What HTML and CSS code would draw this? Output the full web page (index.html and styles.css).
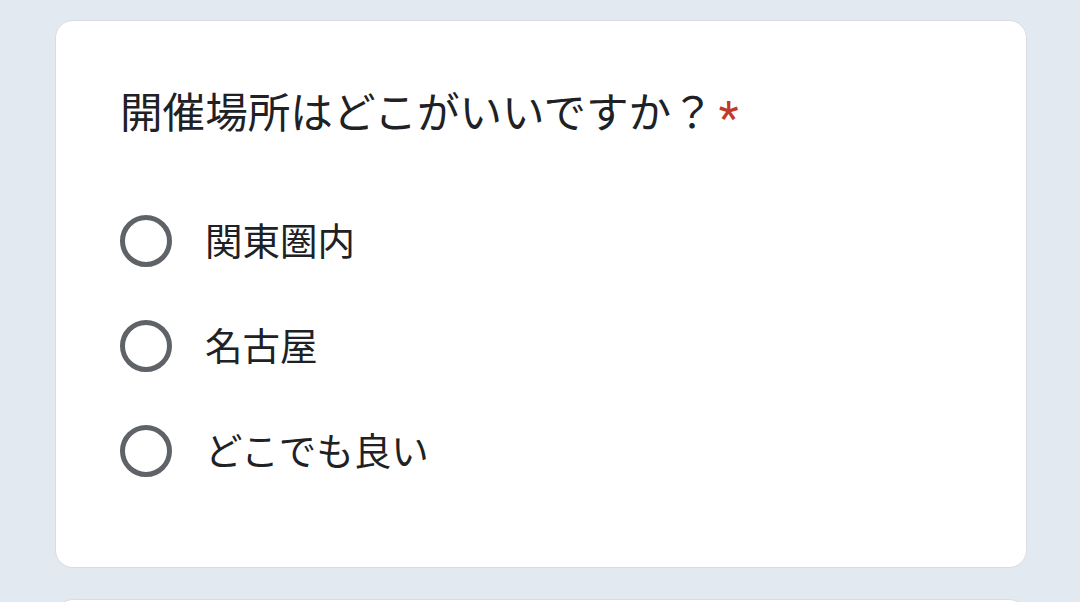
FILE: index.html
```html
<!DOCTYPE html>
<html lang="ja">
<head>
  <meta charset="UTF-8">
  <meta name="viewport" content="width=device-width, initial-scale=1.0">
  <title>開催場所</title>
  <link rel="stylesheet" href="styles.css">
</head>
<body>
  <div class="form-page">
    <!-- Question card -->
    <div class="question-card">
      <div class="question-title">開催場所はどこがいいですか？<span class="required">*</span></div>

      <div class="options">
        <label class="option">
          <span class="radio"></span>
          <span class="option-label">関東圏内</span>
        </label>
        <label class="option">
          <span class="radio"></span>
          <span class="option-label">名古屋</span>
        </label>
        <label class="option">
          <span class="radio"></span>
          <span class="option-label">どこでも良い</span>
        </label>
      </div>
    </div>

    <!-- Next card (cut off) -->
    <div class="question-card next-card"></div>
  </div>
</body>
</html>
```

FILE: styles.css
```css
body {
  margin: 0;
  background: #e2e9f1;
  font-family: 'Noto Sans CJK JP', 'Noto Sans', sans-serif;
  color: #202124;
}

.form-page {
  display: flex;
  flex-direction: column;
  gap: 31px;
  padding: 20px 53px 0 55px;
  height: 602px;
  box-sizing: border-box;
  overflow: hidden;
}

.question-card {
  background: #ffffff;
  border: 1px solid #d9dce1;
  border-radius: 18px;
  padding: 61px 64px 42px 64px;
  height: 443px;
  flex-shrink: 0;
}

.question-title {
  font-size: 42.6px;
  line-height: 56px;
  white-space: nowrap;
}

.required {
  color: #c0392b;
  font-size: 46px;
  line-height: 0;
  margin-left: 5px;
  font-family: 'Roboto', sans-serif;
  vertical-align: -6px;
}

.options {
  display: flex;
  flex-direction: column;
  margin-top: 50px;
}

.option {
  display: flex;
  align-items: center;
  height: 105px;
  gap: 33px;
}

.radio {
  width: 42px;
  height: 42px;
  border: 5px solid #5f6368;
  border-radius: 50%;
  flex-shrink: 0;
}

.option-label {
  font-size: 37.5px;
  line-height: 50px;
  margin-top: -4px;
}

.next-card {
  height: 200px;
}
```
